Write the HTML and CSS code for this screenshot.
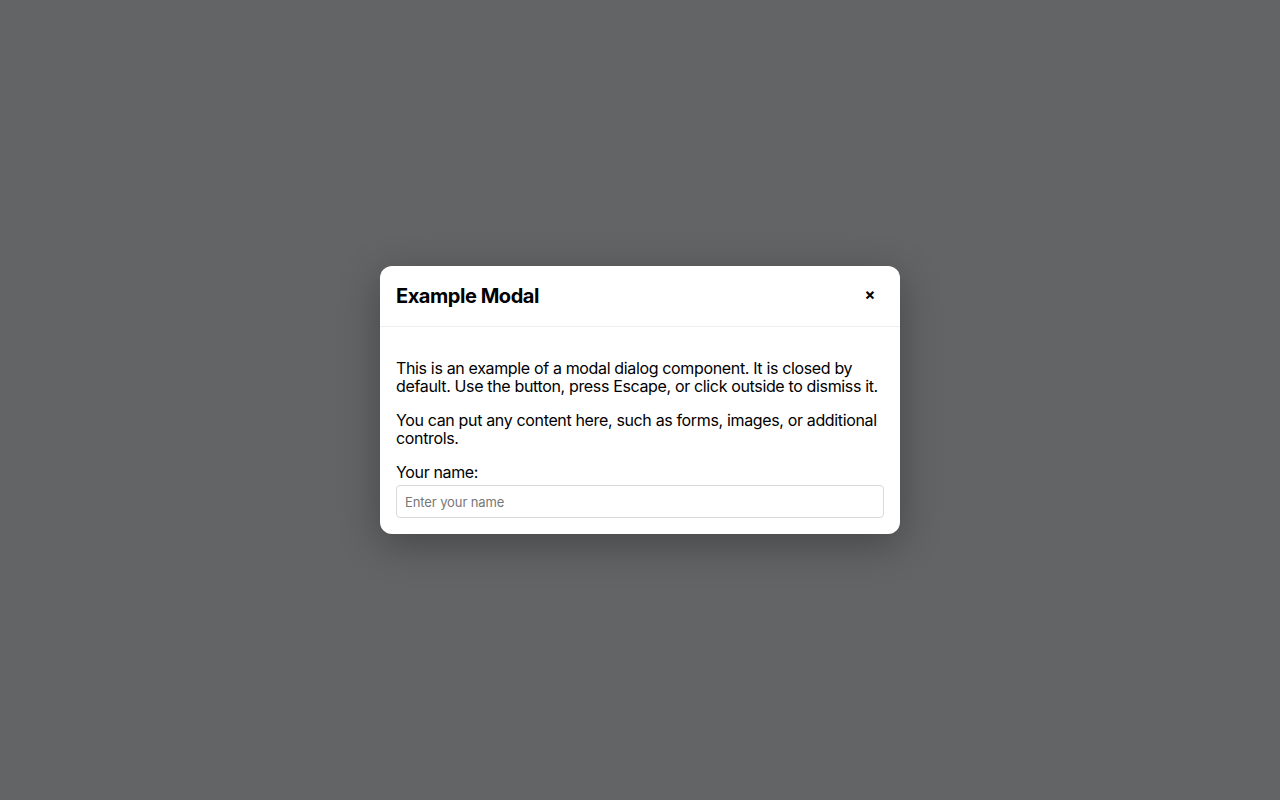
FILE: index.html
```html
<!DOCTYPE html>
<html lang="en">
<head>
<meta charset="utf-8">
<title>Example Modal</title>
<link rel="stylesheet" href="styles.css">
</head>
<body>
<div class="overlay">
  <div class="modal" role="dialog" aria-labelledby="modal-title">
    <div class="modal-header">
      <h2 id="modal-title" class="modal-title">Example Modal</h2>
      <button class="close-btn" aria-label="Close">×</button>
    </div>
    <div class="modal-body">
      <p>This is an example of a modal dialog component. It is closed by default. Use the button, press Escape, or click outside to dismiss it.</p>
      <p>You can put any content here, such as forms, images, or additional controls.</p>
      <label class="field-label" for="name">Your name:</label>
      <input id="name" class="field-input" type="text" placeholder="Enter your name">
    </div>
  </div>
</div>
</body>
</html>
```
FILE: styles.css
```css
html, body {
  margin: 0;
  padding: 0;
  height: 100%;
}
body {
  font-family: Inter, "Liberation Sans", sans-serif;
  background: #ffffff;
}
.overlay {
  height: 100%;
  background: #636466;
  display: flex;
  align-items: center;
  justify-content: center;
}
.modal {
  width: 520px;
  background: #fff;
  border-radius: 12px;
  box-shadow: 0 10px 40px rgba(0, 0, 0, 0.3);
  overflow: hidden;
}
.modal-header {
  display: flex;
  align-items: center;
  justify-content: space-between;
  padding: 16px;
  border-bottom: 1px solid #eeeeee;
}
.modal-title {
  margin: 0;
  font-size: 20px;
  line-height: 28px;
  font-weight: 700;
  letter-spacing: -0.45px;
  color: #000;
}
.close-btn {
  border: none;
  background: transparent;
  font-family: Inter, "Liberation Sans", sans-serif;
  font-size: 16px;
  font-weight: 700;
  line-height: 16px;
  width: 28px;
  height: 28px;
  padding: 0 0 4px;
  color: #000;
  cursor: pointer;
}
.modal-body {
  padding: 16px;
  font-size: 16px;
  line-height: 18px;
  letter-spacing: -0.35px;
  color: #000;
}
.modal-body p {
  margin: 16px 0;
}
.field-label {
  display: block;
}
.field-input {
  display: block;
  box-sizing: border-box;
  width: 100%;
  height: 33px;
  margin-top: 4px;
  padding: 0 8px;
  border: 1px solid #d9d9d9;
  border-radius: 4px;
  font-family: Inter, "Liberation Sans", sans-serif;
  font-size: 13px;
  letter-spacing: -0.1px;
  color: #000;
}
.field-input::placeholder {
  color: #777;
}
```
